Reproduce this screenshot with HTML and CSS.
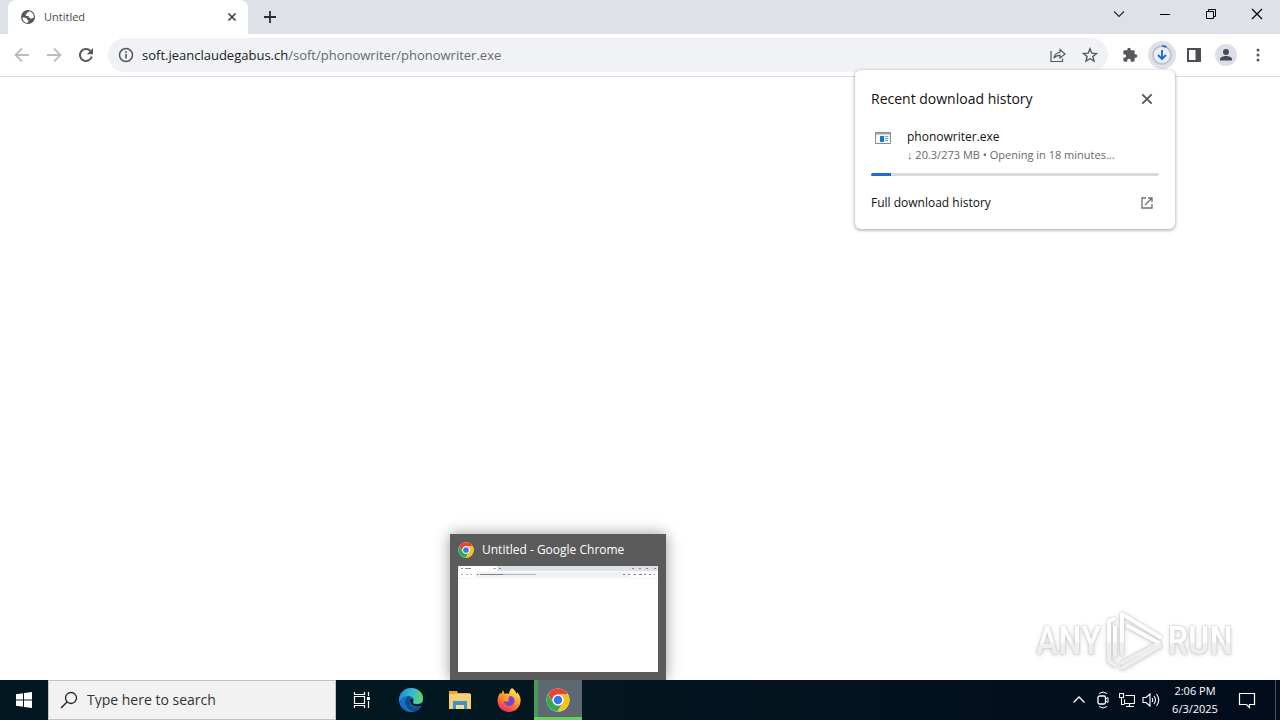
FILE: index.html
```html
<!DOCTYPE html>
<html lang="en">
<head>
<meta charset="utf-8">
<meta name="viewport" content="width=device-width, initial-scale=1">
<title>Untitled</title>
<link rel="stylesheet" href="styles.css">
</head>
<body>
<svg class="sprite" aria-hidden="true">
  <symbol id="chrome" viewBox="0 0 48 48">
    <circle cx="24" cy="24" r="23" fill="#fff"/>
    <path d="M24 13h20.1A23 23 0 0 0 4.100 12.500L14.500 29.500A11 11 0 0 1 24 13z" fill="#ea4335"/>
    <path d="M14.500 29.500L4.100 12.500A23 23 0 0 0 23 47L33.500 29.500A11 11 0 0 1 14.500 29.500z" fill="#34a853"/>
    <path d="M33.500 29.500L23 47A23 23 0 0 0 44.100 13H24A11 11 0 0 1 33.500 29.500z" fill="#fbc116"/>
    <circle cx="24" cy="24" r="11" fill="#fff"/>
    <circle cx="24" cy="24" r="8.500" fill="#3478e8"/>
  </symbol>
</svg>

<header class="tabstrip">
  <div class="tab">
    <svg class="i16" viewBox="0 0 16 16"><circle cx="8" cy="8" r="7" fill="#55585c"/><path d="M2.500 8.500c2 0 4.300.2 4.500 1.700.2 1 1.600.7 1.500 1.800-.1.900-.9 1-.9 1.900-3 0-5-2.400-5.100-5.400zM9 2.200c-.3 1.200-1.900.8-2 2-.1 1.100-1.700.7-1.500 1.900.2 1.300 2.400.5 3.200 1.400.8.800.5 1.900 1.700 2 1.200.2 1.800-.9 3.300-.8.600-3-1.300-5.800-4.700-6.500z" fill="#fff"/></svg>
    <span class="tab-title">Untitled</span>
    <button class="plain" aria-label="Close tab"><svg class="i16" viewBox="0 0 16 16"><path d="M4.500 4.500l7 7M11.500 4.500l-7 7" stroke="#3c4043" stroke-width="1.700"/></svg></button>
  </div>
  <button class="plain new-tab" aria-label="New tab"><svg class="i16" viewBox="0 0 16 16"><path d="M8 2v12M2 8h12" stroke="#2b2e38" stroke-width="1.800"/></svg></button>
  <div class="window-controls">
    <button class="plain" aria-label="Search tabs"><svg class="i16" viewBox="0 0 16 16"><path d="M3 5.500l5 5 5-5" stroke="#222" fill="none" stroke-width="1.100"/></svg></button>
    <button class="plain" aria-label="Minimize"><svg class="i16" viewBox="0 0 16 16"><path d="M3 8.500h10" stroke="#000"/></svg></button>
    <button class="plain" aria-label="Restore"><svg class="i16" viewBox="0 0 16 16"><path d="M3.500 5.500h7v7h-7zM5.500 5.500v-2h7v7h-2" stroke="#000" fill="none"/></svg></button>
    <button class="plain" aria-label="Close"><svg class="i16" viewBox="0 0 16 16"><path d="M3 3l10 10M13 3L3 13" stroke="#000" stroke-width="1.200"/></svg></button>
  </div>
</header>

<div class="toolbar">
  <nav class="nav">
    <button class="plain" aria-label="Back"><svg class="i16" viewBox="0 0 16 16"><path d="M15 8H2M8 1.500L1.500 8 8 14.500" stroke="#babcbe" fill="none" stroke-width="1.800"/></svg></button>
    <button class="plain" aria-label="Forward"><svg class="i16" viewBox="0 0 16 16"><path d="M1 8h13M8 1.500L14.500 8 8 14.500" stroke="#babcbe" fill="none" stroke-width="1.800"/></svg></button>
    <button class="plain" aria-label="Reload"><svg class="i16" viewBox="0 0 16 16"><path d="M13.800 9.500A6 6 0 1 1 12.400 3.900" stroke="#55585c" fill="none" stroke-width="2"/><path d="M15 1v6.200H8.800z" fill="#55585c"/></svg></button>
  </nav>
  <div class="omnibox">
    <svg class="i16" viewBox="0 0 16 16"><circle cx="8" cy="8" r="6.500" fill="none" stroke="#55585c" stroke-width="1.500"/><path d="M8 7v4.500M8 4.300v1.700" stroke="#55585c" stroke-width="1.600"/></svg>
    <a class="url" href="#"><span class="host">soft.jeanclaudegabus.ch</span>/soft/phonowriter/phonowriter.exe</a>
    <button class="plain" aria-label="Share"><svg class="i16" viewBox="0 0 16 16"><path d="M1 4v10.500h11.500V11.500M3.800 11.200C4.500 7.500 6.500 5.800 10 5.500V2.500L15 7l-5 4V8.300C7.300 8.200 5.300 9 3.800 11.200z" fill="none" stroke="#55585c" stroke-width="1.200"/></svg></button>
    <button class="plain" aria-label="Bookmark"><svg class="i16" viewBox="0 0 16 16"><path d="M8 1.800l1.800 4.300 4.700.4-3.600 3 1.100 4.600L8 11.700l-4 2.400 1.100-4.600-3.600-3 4.700-.4z" fill="none" stroke="#55585c" stroke-width="1.400"/></svg></button>
  </div>
  <div class="actions">
    <button class="plain" aria-label="Extensions"><svg class="i16" viewBox="0 0 24 24"><path d="M20.500 11H19V7a2 2 0 0 0-2-2h-4V3.500a2.500 2.500 0 0 0-5 0V5H4a2 2 0 0 0-2 2v3.800h1.500a2.700 2.700 0 0 1 0 5.400H2V20a2 2 0 0 0 2 2h3.800v-1.500a2.700 2.700 0 0 1 5.400 0V22H17a2 2 0 0 0 2-2v-4h1.500a2.500 2.500 0 0 0 0-5z" fill="#55585c"/></svg></button>
    <button class="plain" aria-label="Downloads"><svg class="i28" viewBox="0 0 28 28"><circle cx="14" cy="14" r="14" fill="#dfe1e7"/><circle cx="14" cy="14" r="9" fill="#e9effa" stroke="#bbc0cc" stroke-width="1.800"/><path d="M14 5a9 9 0 0 1 4.500 1.200" stroke="#3972c4" stroke-width="2" fill="none"/><path d="M14 9v9M10 14l4 4 4-4" stroke="#1967d2" stroke-width="1.800" fill="none"/></svg></button>
    <button class="plain" aria-label="Side panel"><svg class="i16" viewBox="0 0 16 16"><path d="M1 1h14v14H1zM3 3v10h6.500V3z" fill="#4a4d51" fill-rule="evenodd"/></svg></button>
    <button class="plain" aria-label="Profile"><svg class="i22" viewBox="0 0 22 22"><circle cx="11" cy="11" r="11" fill="#dcdfe8"/><circle cx="11" cy="8" r="3" fill="#464b58"/><path d="M5 16.500v-1.500c0-2 3.500-3 6-3s6 1 6 3v1.500z" fill="#464b58"/></svg></button>
    <button class="plain" aria-label="Menu"><svg class="i16" viewBox="0 0 16 16"><g fill="#55585c"><circle cx="8" cy="3" r="1.500"/><circle cx="8" cy="8" r="1.500"/><circle cx="8" cy="13" r="1.500"/></g></svg></button>
  </div>

  <section class="downloads">
    <div class="dl-head">
      <h2>Recent download history</h2>
      <button class="plain" aria-label="Close downloads"><svg class="i16" viewBox="0 0 16 16"><path d="M3.300 3.300l9.400 9.400M12.700 3.300l-9.400 9.400" stroke="#55585c" stroke-width="1.900"/></svg></button>
    </div>
    <div class="dl-item">
      <svg class="i16" viewBox="0 0 16 16"><path d="M.5 2.500h15v11H.5z" fill="#f8f8f8" stroke="#8b8b8b"/><path d="M1 3h14v1.500H1z" fill="#a5a5a5"/><path d="M5 6h4v6H5z" fill="#1879d2"/><path d="M10 6.500h3.500M10 8.500h3.500M10 10.500h3" stroke="#6ba6dc"/></svg>
      <div>
        <div class="dl-name">phonowriter.exe</div>
        <div class="dl-status">↓ 20.3/273 MB • Opening in 18 minutes...</div>
      </div>
    </div>
    <div class="bar"><div class="bar-fill" style="width:7%"></div></div>
    <a class="dl-all" href="#">Full download history
      <svg class="i16" viewBox="0 0 16 16"><path d="M7 3H3v10h10V9M9 3h4v4M13 3L6 10" fill="none" stroke="#6c7074" stroke-width="1.300"/></svg></a>
  </section>
</div>

<main class="page">
  <div class="watermark">
    <span>ANY</span>
    <svg class="mark" viewBox="0 0 58 62"><defs><linearGradient id="sheen" gradientUnits="userSpaceOnUse" x1="0" x2="0" y1="0" y2="62"><stop offset=".5" stop-color="#fff"/><stop offset=".56" stop-color="#eee"/></linearGradient></defs><g fill="none" stroke="url(#sheen)" stroke-width="4" stroke-linejoin="round" stroke-linecap="round"><path d="M9 9L4 11v40l6 4"/><path d="M17 44V4l38 23"/><path d="M10 46V17"/><path d="M23 16l31 17-37 20"/><path d="M17 58l38-22"/></g></svg>
    <span>RUN</span>
  </div>
  <section class="preview">
    <div class="preview-title"><svg class="i16"><use href="#chrome"/></svg>Untitled - Google Chrome</div>
    <svg class="thumb" viewBox="0 0 200 106"><path d="M0 0h200v106H0z" fill="#fff"/><path d="M39 0h161v5H39zM0 0h1v5H0z" fill="#dee1e8"/><rect x="17" y="6" width="156" height="5" rx="2.500" fill="#eff2f4"/><path d="M0 12h200" stroke="#e3e3e3" stroke-width=".5"/><path d="M3 2.500h2M7 2.500h6M35.500 2.500h2M41 2.500h2M174 2.500h2M181 2.500h2M188 2.500h2M196 2.500h2M19 8.500h2" stroke="#858a90" stroke-width="1"/><path d="M22 8.500h23M165 8.500h2M170 8.500h2M176 8.500h2M181 8.500h3M186 8.500h2M191 8.500h2M196 8.500h1" stroke="#7c8188" stroke-width="1.200"/><path d="M3 8.500h2M8 8.500h2M12 8.500h2M45 8.500h33" stroke="#b2b6bb"/></svg>
  </section>
</main>

<footer class="taskbar">
  <button class="plain start" aria-label="Start"><svg class="i16" viewBox="0 0 16 16"><path d="M0 2.200L7 1.200V7.600H0zM8 1l8-1v7.600H8zM0 8.500h7v6.300l-7-1zM8 8.500h8V16l-8-1.100z" fill="#fff"/></svg></button>
  <label class="search">
    <svg class="i18" viewBox="0 0 18 18"><circle cx="11" cy="7" r="5.500" fill="none" stroke="#222" stroke-width="1.300"/><path d="M7 11L1 17" stroke="#222" stroke-width="1.400"/></svg>
    <input type="text" placeholder="Type here to search" aria-label="Search">
  </label>
  <div class="apps">
    <button class="plain app" aria-label="Task view"><svg class="i18" viewBox="0 0 18 18"><path d="M1.500 1v2.500h10V1M1.500 17v-2.500h10V17M1.500 5.500h10v7h-10zM15.500 1v4M15.500 10v7" fill="none" stroke="#fff" stroke-width="1.200"/><path d="M14 6h3v3h-3z" fill="#fff"/></svg></button>
    <button class="plain app" aria-label="Edge"><svg class="i24" viewBox="0 0 24 24"><defs><linearGradient id="edge-top" x1="0" x2="1" y1=".3" y2=".5"><stop stop-color="#1689d4"/><stop offset=".5" stop-color="#35b9d5"/><stop offset="1" stop-color="#63d66a"/></linearGradient></defs><circle cx="12" cy="12" r="12" fill="#1470c5"/><path d="M0 11C1 4 6 0 12 0c7 0 12 4.500 12 10 0 4-3 6-6 6-3 0-4.500-1-4-2 2-3 0-6-4-6C5.500 8 2 9.500 0 14z" fill="url(#edge-top)"/><path d="M10 8c-4 2-5 7-2 11 2 3 5 4.500 8 4.300 3-.7 5-2.300 6.500-4.800-5 2.500-10.500.5-11.500-3.500-.4-2 .3-3 1-4z" fill="#124a8b"/><path d="M12.500 10.500c-1.800 1.300-2 4.400 1 6.500 2.500 1.800 6.500 2 9.600.2L24 14.500c-1.500 1.300-3.500 1.800-6 1.700-3 0-4.500-1-4-2 .8-1.200.4-3-1.500-3.700z" fill="#031b25"/></svg></button>
    <button class="plain app" aria-label="File Explorer"><svg class="i24" viewBox="0 0 24 24"><path d="M1 3h8l1 2h12v16H1z" fill="#e9a92f"/><path d="M1 6h22v15H1z" fill="#f8d073"/><path d="M5 13h14v8h-3v-4H8v4H5z" fill="#3595d5"/><path d="M8 17h8v4h-3v-2h-2v2H8z" fill="#fbdf8a"/></svg></button>
    <button class="plain app" aria-label="Firefox"><svg class="i24" viewBox="0 0 24 24"><defs><linearGradient id="fire" x1=".8" x2=".3" y1="0" y2="1"><stop stop-color="#fff34a"/><stop offset=".4" stop-color="#ffab2c"/><stop offset=".75" stop-color="#ff5a3b"/><stop offset="1" stop-color="#e62b76"/></linearGradient></defs><path d="M15 0c3 2 4 4 4.500 6 .5-.5.500-1 .5-2 3 3 4 6.500 3.500 10-.8 6-5.500 10-11.500 10C5.500 24 .5 19 .5 12.500.5 9 2 7 3 4.500l1 2L6 2l1.500 4c1.500-.6 3-.4 4.500 0 .3-2.500 1-4.500 3-6z" fill="url(#fire)"/><path d="M7 11c1-2 3-3.500 6-3 4 .5 5.500 4 4 7s-5.500 4-8 2c-1.500-1-2.300-2.700-2-4 1.500 1 3.500.7 5-1-1.500-.2-2.500-1-5-1z" fill="#7444d7"/><path d="M6 8l4-1 3 2-2 2 1 2c-2 1-5 .5-6-2z" fill="#ff9b2b"/></svg></button>
    <button class="plain app active" aria-label="Chrome"><svg class="i24"><use href="#chrome"/></svg></button>
  </div>
  <div class="tray">
    <svg class="i16" viewBox="0 0 16 16"><path d="M2.500 10.500L8 5l5.500 5.500" fill="none" stroke="#fff" stroke-width="1.300"/></svg>
    <svg class="i18" viewBox="0 0 18 18"><path d="M5 2.500Q9-.5 13 2.500M5 15.500Q9 18.500 13 15.500" stroke="#fff" fill="none"/><rect x="4" y="5" width="7.500" height="8" rx="1.500" fill="none" stroke="#fff" stroke-width="1.300"/><path d="M11.500 8l2.500-1.500v5L11.500 10z" stroke="#fff" fill="none"/></svg>
    <svg class="i16" viewBox="0 0 16 16"><path d="M6.500 3.500h9v8h-10V7.500M7 14.500h8M10.500 11.500v3M.5 1.500h4v4h-4zM2.500 5.500v7h3" fill="none" stroke="#fff" stroke-width="1.100"/></svg>
    <svg class="i18" viewBox="0 0 18 18"><path d="M1 6.500h3l4-3.500v12l-4-3.500H1zM10 7q1.500 2 0 4M12 5q3 4 0 8M14.500 3q4.500 6 0 12" fill="none" stroke="#fff" stroke-width="1.100"/></svg>
    <div class="clock"><span>2:06 PM</span><span>6/3/2025</span></div>
    <button class="plain" aria-label="Notifications"><svg class="i18" viewBox="0 0 18 18"><path d="M1.500 2.500h15v11h-5v3l-3-3h-7z" fill="none" stroke="#fff" stroke-width="1.200"/></svg></button>
  </div>
  <button class="plain desktop" aria-label="Show desktop"></button>
</footer>
</body>
</html>
```
FILE: styles.css
```css
* { box-sizing: border-box; }
body {
  margin: 0;
  min-height: 100vh;
  display: flex;
  flex-direction: column;
  background: #fff;
  color: #202124;
  font: 12px/16px "Open Sans", "Noto Sans", sans-serif;
}
svg { display: block; flex: none; }
a { color: inherit; text-decoration: none; }
.sprite { display: none; }
.i16 { width: 16px; height: 16px; }
.i18 { width: 18px; height: 18px; }
.i22 { width: 22px; height: 22px; }
.i24 { width: 24px; height: 24px; }
.i28 { width: 28px; height: 28px; }
.plain {
  display: grid;
  place-items: center;
  padding: 0;
  border: 0;
  background: none;
  font: inherit;
  color: inherit;
}

.tabstrip {
  display: flex;
  height: 34px;
  padding-left: 8px;
  background: #dee1e8;
}
.tab {
  display: flex;
  align-items: center;
  gap: 8px;
  width: 240px;
  padding: 0 8px 0 12px;
  border-radius: 8px 8px 0 0;
  background: #fff;
  color: #45484c;
}
.tab-title { flex: 1; font-size: 11px; }
.new-tab { width: 44px; }
.window-controls { display: flex; margin-left: auto; padding-bottom: 6px; }
.window-controls button { width: 46px; }

.toolbar {
  position: relative;
  z-index: 1;
  display: flex;
  align-items: center;
  height: 43px;
  padding: 0 6px;
  border-bottom: 1px solid #dadce0;
}
.nav { display: flex; width: 102px; }
.nav button, .actions button { width: 32px; height: 32px; }
.omnibox {
  flex: 1;
  display: flex;
  align-items: center;
  gap: 8px;
  height: 34px;
  padding: 0 10px;
  border-radius: 17px;
  background: #f0f2f5;
}
.url { flex: 1; font-size: 13px; line-height: 20px; color: #666a6f; }
.host { color: #202124; }
.omnibox button + button { margin-left: 8px; }
.actions { display: flex; padding-left: 6px; }

.downloads {
  position: absolute;
  top: 36px;
  right: 105px;
  width: 320px;
  padding: 18px 16px 17px;
  border-radius: 6px;
  background: #fff;
  box-shadow: 0 1px 3px 1px rgba(0, 0, 0, .25);
  color: #111;
}
.dl-head { display: flex; justify-content: space-between; padding-right: 4px; line-height: 22px; }
h2 { margin: 0; font-size: 14px; font-weight: 400; }
.dl-item { display: flex; gap: 16px; padding: 18px 0 9px 4px; }
.dl-item .i16 { margin-top: 2px; }
.dl-name { font-size: 12px; line-height: 18px; }
.dl-status { font-size: 11px; line-height: 18px; color: #66696e; white-space: nowrap; }
.bar { height: 3px; border-radius: 2px; background: #d8dadd; overflow: hidden; }
.bar-fill { height: 100%; background: #1e6dd0; }
.dl-all {
  display: flex;
  justify-content: space-between;
  align-items: center;
  padding: 18px 4px 0 0;
  font-size: 12px;
  line-height: 18px;
}

.page { flex: 1; position: relative; }
.preview {
  position: absolute;
  left: 450px;
  bottom: 0;
  width: 216px;
  padding: 8px;
  background: #5b5b5b;
  box-shadow: 0 0 14px rgba(0, 0, 0, .4);
  color: #fff;
}
.preview-title { display: flex; align-items: center; gap: 8px; padding-bottom: 8px; }
.thumb { width: 100%; }
.watermark {
  position: absolute;
  right: 47px;
  bottom: 8px;
  display: flex;
  align-items: center;
  gap: 4px;
  font: 500 38px/62px "Roboto Condensed", "Open Sans Condensed", "Liberation Sans Narrow", "Liberation Sans", sans-serif;
  filter: drop-shadow(0 0 1px #bbb) drop-shadow(0 1px 2px #ddd);
}
.watermark span {
  background: linear-gradient(#fff 50%, #eee 56%);
  background-clip: text;
  -webkit-background-clip: text;
  color: transparent;
}
.mark { width: 58px; height: 62px; }

.taskbar {
  position: relative;
  z-index: 1;
  display: flex;
  height: 40px;
  background: linear-gradient(90deg, #021820, #031620 50%, #020c1c);
  color: #fff;
}
.start, .app { width: 48px; }
.search {
  display: flex;
  align-items: center;
  gap: 9px;
  width: 288px;
  padding-left: 11px;
  border: 1px solid #c3c3c3;
  background: #f2f2f2;
}
.search input {
  min-width: 0;
  flex: 1;
  padding: 0;
  border: 0;
  outline: 0;
  background: none;
  font: inherit;
  font-size: 14px;
}
.search input::placeholder { color: #333; opacity: 1; }
.apps { display: flex; gap: 1px; padding-left: 2px; }
.active { background: #5d6970; box-shadow: inset 0 -3px #69cf5c, inset 4px 0 #4a9a57; }
.tray { display: flex; align-items: center; gap: 7px; margin-left: auto; padding-right: 19px; }
.clock { display: flex; flex-direction: column; align-items: center; width: 56px; margin: 0 8px 0 0; font-size: 11px; line-height: 18px; }
.desktop { width: 5px; border-left: 1px solid #4b5461; }
```
